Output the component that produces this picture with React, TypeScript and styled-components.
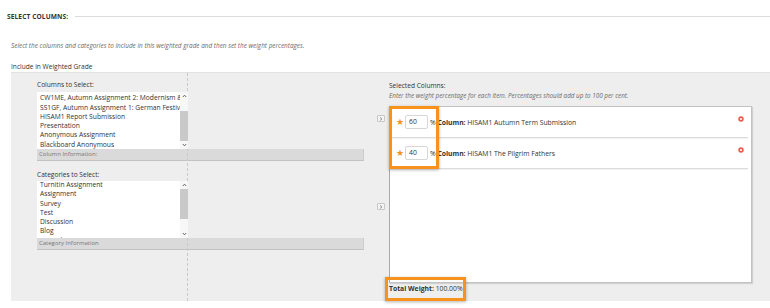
import React from "react";
import styled, { createGlobalStyle } from "styled-components";

const GlobalStyle = createGlobalStyle`
  html, body {
    margin: 0;
    padding: 0;
    background: #ffffff;
  }
  body {
    font-family: "Open Sans", "Liberation Sans", sans-serif;
    color: #333333;
    width: 770px;
    height: 308px;
    overflow: hidden;
  }
`;

const Page = styled.div`
  width: 770px;
`;

const Header = styled.div`
  display: flex;
  align-items: center;
  height: 32px;
  padding-left: 7px;
`;

const HeaderTitle = styled.h2`
  margin: 0;
  font-size: 6.6px;
  font-weight: 700;
  color: #333333;
  letter-spacing: 0.1px;
`;

const HeaderRule = styled.div`
  flex: 1;
  height: 1px;
  margin-left: 7px;
  background: #dcdcdc;
`;

const Instructions = styled.p<{ $top: number }>`
  margin: ${(p) => p.$top}px 0 0 11px;
  font-size: 6.4px;
  line-height: 10px;
  font-style: italic;
  color: #6b6b6b;
`;

const FieldLabel = styled.div<{ $top?: number; $left?: number }>`
  margin-top: ${(p) => p.$top ?? 0}px;
  margin-left: ${(p) => p.$left ?? 0}px;
  font-size: 6.6px;
  line-height: 10px;
  color: #333333;
`;

const Panel = styled.div`
  position: relative;
  margin-left: 11px;
  width: 759px;
  height: 229px;
  background: #eeeeee;
  border-top: 1px solid #e2e2e2;
  box-sizing: border-box;
  display: grid;
  grid-template-columns: 366px 12px 363px;

  &::before {
    content: "";
    position: absolute;
    left: 176px;
    top: 0;
    bottom: 0;
    border-left: 1px dashed #c9c9c9;
  }
`;

const LeftSection = styled.div`
  padding: 7px 0 0 26px;
`;

const ListBox = styled.div<{ $top: number }>`
  position: relative;
  z-index: 1;
  margin-top: ${(p) => p.$top}px;
  width: 151px;
  height: 57px;
  background: #ffffff;
  display: flex;
  overflow: hidden;
`;

const ListItems = styled.ul<{ $offset: number }>`
  flex: 1;
  margin: ${(p) => p.$offset}px 0 0 0;
  padding: 0 0 0 3px;
  list-style: none;
  font-size: 6.7px;
  line-height: 9.3px;
  color: #333333;
  white-space: nowrap;
  overflow: hidden;
`;

const ScrollBar = styled.div`
  width: 8px;
  display: flex;
  flex-direction: column;
  background: #f7f7f7;
`;

const ScrollArrow = styled.div`
  height: 8px;
  display: flex;
  align-items: center;
  justify-content: center;
`;

const ScrollTrack = styled.div`
  flex: 1;
`;

const ScrollThumb = styled.div<{ $top: number }>`
  margin-top: ${(p) => p.$top}px;
  height: 30px;
  background: #c9c9c9;
`;

const InfoBar = styled.div`
  width: 327px;
  height: 12px;
  box-sizing: border-box;
  padding-left: 2px;
  background: #dadada;
  border-bottom: 1px solid #c2c2c2;
  border-right: 1px solid #cccccc;
  font-size: 6px;
  line-height: 11px;
  color: #777777;
`;

const ArrowColumn = styled.div`
  display: flex;
  flex-direction: column;
  padding-top: 42px;
`;

const MoveButton = styled.button<{ $gap?: number }>`
  margin: ${(p) => p.$gap ?? 0}px 0 0 0;
  padding: 0;
  width: 8px;
  height: 7px;
  background: #f4f4f4;
  border: 1px solid #c8c8c8;
  border-radius: 1px;
  display: flex;
  align-items: center;
  justify-content: center;
`;

const RightSection = styled.div`
  padding-top: 8px;
`;

const Hint = styled.div`
  font-size: 6.3px;
  line-height: 10px;
  font-style: italic;
  color: #6b6b6b;
  white-space: nowrap;
`;

const SelectedBox = styled.div`
  position: relative;
  margin-top: 5px;
  height: 177px;
  box-sizing: border-box;
  background: #ffffff;
  border: 1px solid #c2c2c2;
  border-left-color: #a9a9a9;
  box-shadow: 1px 1px 1px rgba(0, 0, 0, 0.12);
`;

const Row = styled.div`
  display: flex;
  align-items: center;
  height: 30px;
  margin-right: 3px;
  padding-left: 6px;
  border-bottom: 1px solid #dcdcdc;
  box-shadow: 0 1px 0 #f2f2f2;
  font-size: 6.8px;
  color: #333333;
  white-space: nowrap;
`;

const Star = styled.span`
  color: #f7941d;
  font-size: 9px;
  line-height: 10px;
  width: 9px;
`;

const WeightInput = styled.div`
  width: 23px;
  height: 14px;
  box-sizing: border-box;
  border: 1px solid #d6d6d6;
  border-radius: 2px;
  padding-left: 3px;
  line-height: 12px;
  font-size: 6.8px;
  background: #ffffff;
`;

const RowText = styled.span`
  flex: 1;
  margin-left: 2px;

  b {
    font-weight: 700;
  }
`;

const RemoveIcon = styled.svg`
  align-self: flex-start;
  margin: 9px 4px 0 0;
`;

const Highlight = styled.div`
  position: absolute;
  left: -1px;
  top: -1px;
  width: 50px;
  height: 63px;
  box-sizing: border-box;
  border: 3px solid #f7921e;
  box-shadow: 0 1px 3px rgba(0, 0, 0, 0.3);
  pointer-events: none;
`;

const Total = styled.div`
  position: relative;
  width: max-content;
  margin-top: 1px;
  font-size: 6.8px;
  line-height: 10px;
  color: #333333;

  b {
    font-weight: 700;
  }

  &::after {
    content: "";
    position: absolute;
    left: -4px;
    top: -7px;
    width: 81px;
    height: 24px;
    box-sizing: border-box;
    border: 3px solid #f7921e;
    box-shadow: 0 1px 3px rgba(0, 0, 0, 0.3);
  }
`;

const Chevron = ({ up }: { up?: boolean }) => (
  <svg width="5" height="4" viewBox="0 0 5 4">
    <path
      d={up ? "M0.8 3 L2.5 1.2 L4.2 3" : "M0.8 1 L2.5 2.8 L4.2 1"}
      fill="none"
      stroke="#555"
      strokeWidth="0.9"
    />
  </svg>
);

const RightArrow = () => (
  <svg width="4" height="4" viewBox="0 0 4 4">
    <path d="M1.2 0.6 L2.8 2 L1.2 3.4" fill="none" stroke="#666" strokeWidth="0.8" />
  </svg>
);

const RemoveButton = () => (
  <RemoveIcon width="6" height="6" viewBox="0 0 6 6">
    <circle cx="3" cy="3" r="2.7" fill="#ea5a4e" />
    <path d="M2 2 L4 4 M4 2 L2 4" stroke="#fff" strokeWidth="0.8" />
  </RemoveIcon>
);

type ListProps = {
  items: string[];
  offset: number;
  thumbTop: number;
  top: number;
};

const SelectList = ({ items, offset, thumbTop, top }: ListProps) => (
  <ListBox $top={top}>
    <ListItems $offset={offset}>
      {items.map((item) => (
        <li key={item}>{item}</li>
      ))}
    </ListItems>
    <ScrollBar>
      <ScrollArrow>
        <Chevron up />
      </ScrollArrow>
      <ScrollTrack>
        <ScrollThumb $top={thumbTop} />
      </ScrollTrack>
      <ScrollArrow>
        <Chevron />
      </ScrollArrow>
    </ScrollBar>
  </ListBox>
);

const columns = [
  "CW1MN",
  "CW1ME, Autumn Assignment 2: Modernism & Modernity",
  "SS1GF, Autumn Assignment 1: German Festival Report",
  "HISAM1 Report Submission",
  "Presentation",
  "Anonymous Assignment",
  "Blackboard Anonymous",
];

const categories = [
  "Turnitin Assignment",
  "Assignment",
  "Survey",
  "Test",
  "Discussion",
  "Blog",
  "Journal",
];

const selected = [
  { weight: "60", name: "HISAM1 Autumn Term Submission" },
  { weight: "40", name: "HISAM1 The Pilgrim Fathers" },
];

export default function App() {
  return (
    <Page>
      <GlobalStyle />
      <Header>
        <HeaderTitle>SELECT COLUMNS:</HeaderTitle>
        <HeaderRule />
      </Header>
      <Instructions $top={9}>
        Select the columns and categories to include in this weighted grade and then set
        the weight percentages.
      </Instructions>
      <FieldLabel $top={11} $left={11}>
        Include in Weighted Grade
      </FieldLabel>
      <Panel>
        <LeftSection>
          <FieldLabel>Columns to Select:</FieldLabel>
          <SelectList items={columns} offset={-8} thumbTop={11} top={2} />
          <InfoBar>Column Information:</InfoBar>
          <FieldLabel $top={9}>Categories to Select:</FieldLabel>
          <SelectList items={categories} offset={-1} thumbTop={0} top={1} />
          <InfoBar>Category Information</InfoBar>
        </LeftSection>
        <ArrowColumn>
          <MoveButton aria-label="Add column">
            <RightArrow />
          </MoveButton>
          <MoveButton $gap={81} aria-label="Add category">
            <RightArrow />
          </MoveButton>
        </ArrowColumn>
        <RightSection>
          <FieldLabel>Selected Columns:</FieldLabel>
          <Hint>
            Enter the weight percentage for each item. Percentages should add up to 100 per
            cent.
          </Hint>
          <SelectedBox>
            {selected.map((s) => (
              <Row key={s.name}>
                <Star>★</Star>
                <WeightInput>{s.weight}</WeightInput>
                <RowText>
                  % <b>Column:</b> {s.name}
                </RowText>
                <RemoveButton />
              </Row>
            ))}
            <Highlight />
          </SelectedBox>
          <Total>
            <b>Total Weight:</b> 100.00%
          </Total>
        </RightSection>
      </Panel>
    </Page>
  );
}
